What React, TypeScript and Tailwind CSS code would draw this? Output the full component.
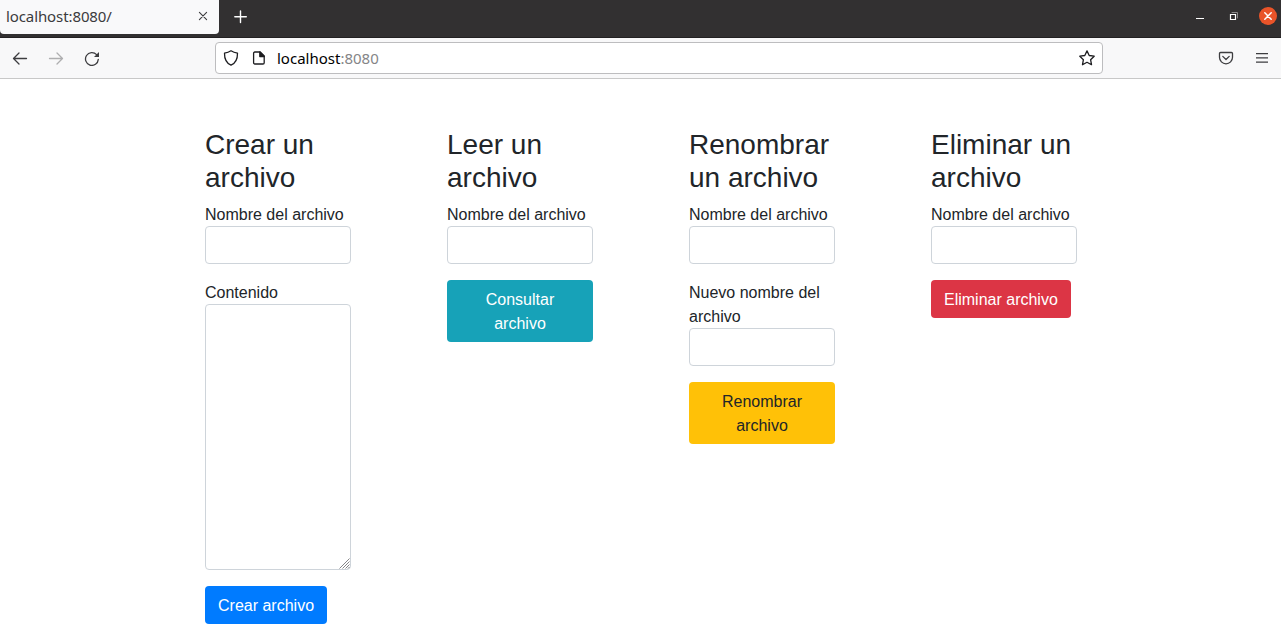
import type { ReactNode } from 'react';

function Icon({ children, className = '' }: { children: ReactNode; className?: string }) {
  return (
    <svg
      width="16"
      height="16"
      viewBox="0 0 16 16"
      fill="none"
      stroke="currentColor"
      strokeWidth="1.3"
      strokeLinecap="round"
      strokeLinejoin="round"
      className={`shrink-0 ${className}`}
    >
      {children}
    </svg>
  );
}

function TabStrip() {
  return (
    <div className="flex h-[38px] items-start border-b border-[#232122] bg-[#323031] text-white">
      <div className="flex h-[34px] w-[219px] items-center justify-between rounded-b-[4px] bg-[#f9f9fa] pr-2 pb-0.5 pl-1.5 text-[#3b3b3d]">
        <span className="text-[15px] tracking-[-0.1px]">localhost:8080/</span>
        <Icon>
          <path d="M4.4 4.4l7.2 7.2M11.6 4.4l-7.2 7.2" strokeWidth="1.1" />
        </Icon>
      </div>
      <div className="flex h-8 flex-1 items-center pl-[13px]">
        <Icon>
          <path d="M8.5 3v11.5M2.8 8.7h11.5" strokeWidth="1.4" />
        </Icon>
        <div className="ml-auto flex items-center">
          <Icon className="mr-[18px]">
            <path d="M4 10.5h8" strokeWidth="1" strokeLinecap="butt" />
          </Icon>
          <Icon className="mr-[17px]">
            <path d="M4.5 6.5h5v5h-5z" strokeWidth="1.2" strokeLinejoin="miter" />
            <path d="M6 4.5h5.5v5.5" stroke="#8c8a8b" strokeWidth="1" strokeLinejoin="miter" />
          </Icon>
          <div className="mr-1 flex size-[18px] items-center justify-center rounded-full bg-[#e95429]">
            <Icon>
              <path d="M4.8 4.8l6.4 6.4M11.2 4.8l-6.4 6.4" strokeWidth="1.5" />
            </Icon>
          </div>
        </div>
      </div>
    </div>
  );
}

function Toolbar() {
  return (
    <div className="flex h-[41px] items-center border-b border-[#c8c8c8] bg-[#f8f8f9] pl-3 pr-[11px] text-[#3d3d40]">
      <Icon>
        <path d="M14.5 8.5h-13M7 3L1.5 8.5L7 14" />
      </Icon>
      <Icon className="ml-5 text-[#aeaeb0]">
        <path d="M1.5 8.5h13M9 3l5.5 5.5L9 14" />
      </Icon>
      <Icon className="ml-5">
        <path d="M14.3 9.4A6.4 6.4 0 1 1 12.6 4.6" />
        <path d="M15 2v5h-5z" fill="currentColor" stroke="none" />
      </Icon>
      <div className="ml-[115px] flex h-8 w-[888px] items-center rounded-[4px] border border-[#bdbdbf] bg-white px-[7px] text-[#1d1d20]">
        <Icon>
          <path d="M8 .8C10.2 2.3 12.4 2.9 14.5 3.2C14.6 8.8 12.4 13.2 8 15.2C3.6 13.2 1.4 8.8 1.5 3.2C3.6 2.9 5.8 2.3 8 .8z" />
        </Icon>
        <Icon className="ml-3">
          <path d="M3.8 2h5.4l4 4v6.8c0 .7-.4 1.2-1.2 1.2H3.8c-.7 0-1.2-.5-1.2-1.2V3.2C2.6 2.5 3.1 2 3.8 2z" />
          <path d="M8.8 2v4.5h4.5z" fill="currentColor" />
        </Icon>
        <span className="ml-2.5 text-[15px] text-black">
          localhost<span className="text-[#858587]">:8080</span>
        </span>
        <Icon className="ml-auto">
          <path d="M8 .9l2.2 4.6 5 .7-3.6 3.5.9 5L8 12.3l-4.5 2.4.9-5L.8 6.2l5-.7z" />
        </Icon>
      </div>
      <Icon className="ml-auto">
        <path d="M2.6 2.5h10.8c.7 0 1.1.4 1.1 1.1v3.7a6.5 6.5 0 0 1-13 0V3.6c0-.7.4-1.1 1.1-1.1z" />
        <path d="M4.8 6.4L8 9.5l3.2-3.1" />
      </Icon>
      <Icon className="ml-5">
        <path d="M2 3.6h12M2 7.9h12M2 12.1h12" strokeWidth="1.3" strokeLinecap="butt" />
      </Icon>
    </div>
  );
}

const fieldClass = 'block w-full rounded-[4px] border border-[#ced4da] bg-white px-3 py-1.5 outline-none';

function Field({ label, multiline = false }: { label: string; multiline?: boolean }) {
  return (
    <label className="relative mb-4 block">
      <span className="-mb-px block pt-px">{label}</span>
      {multiline ? (
        <>
          <textarea className={`${fieldClass} h-[266px] resize-none`} />
          <svg
            width="11"
            height="11"
            viewBox="0 0 11 11"
            stroke="#77777a"
            strokeWidth="0.9"
            className="pointer-events-none absolute right-px bottom-px"
          >
            <path d="M0.5 10.5l10-10M3.5 10.5l7-7M6.5 10.5l4-4M9 10.5l1.5-1.5" />
          </svg>
        </>
      ) : (
        <input type="text" className={`${fieldClass} h-[38px]`} />
      )}
    </label>
  );
}

function FileForm({ title, action, color, children }: { title: string; action: string; color: string; children: ReactNode }) {
  return (
    <form className="w-[146px]" onSubmit={(e) => e.preventDefault()}>
      <h3 className="mb-[7px] pt-px text-[28px] leading-[1.2]">{title}</h3>
      {children}
      <button type="submit" className={`rounded-[4px] border border-transparent px-3 pt-[7px] pb-[5px] text-center ${color}`}>
        {action}
      </button>
    </form>
  );
}

export default function App() {
  return (
    <div className="flex h-[634px] flex-col overflow-hidden bg-white">
      <header className="shrink-0 font-['Noto_Sans',sans-serif]">
        <TabStrip />
        <Toolbar />
      </header>
      <main className="flex items-start gap-24 pt-[47.8px] pl-[205px] font-['Liberation_Sans',sans-serif] text-base text-[#212529]">
        <FileForm title="Crear un archivo" action="Crear archivo" color="bg-[#007bff] text-white">
          <Field label="Nombre del archivo" />
          <Field label="Contenido" multiline />
        </FileForm>
        <FileForm title="Leer un archivo" action="Consultar archivo" color="bg-[#17a2b8] text-white">
          <Field label="Nombre del archivo" />
        </FileForm>
        <FileForm title="Renombrar un archivo" action="Renombrar archivo" color="bg-[#ffc107] text-[#212529]">
          <Field label="Nombre del archivo" />
          <Field label="Nuevo nombre del archivo" />
        </FileForm>
        <FileForm title="Eliminar un archivo" action="Eliminar archivo" color="bg-[#dc3545] text-white">
          <Field label="Nombre del archivo" />
        </FileForm>
      </main>
    </div>
  );
}
